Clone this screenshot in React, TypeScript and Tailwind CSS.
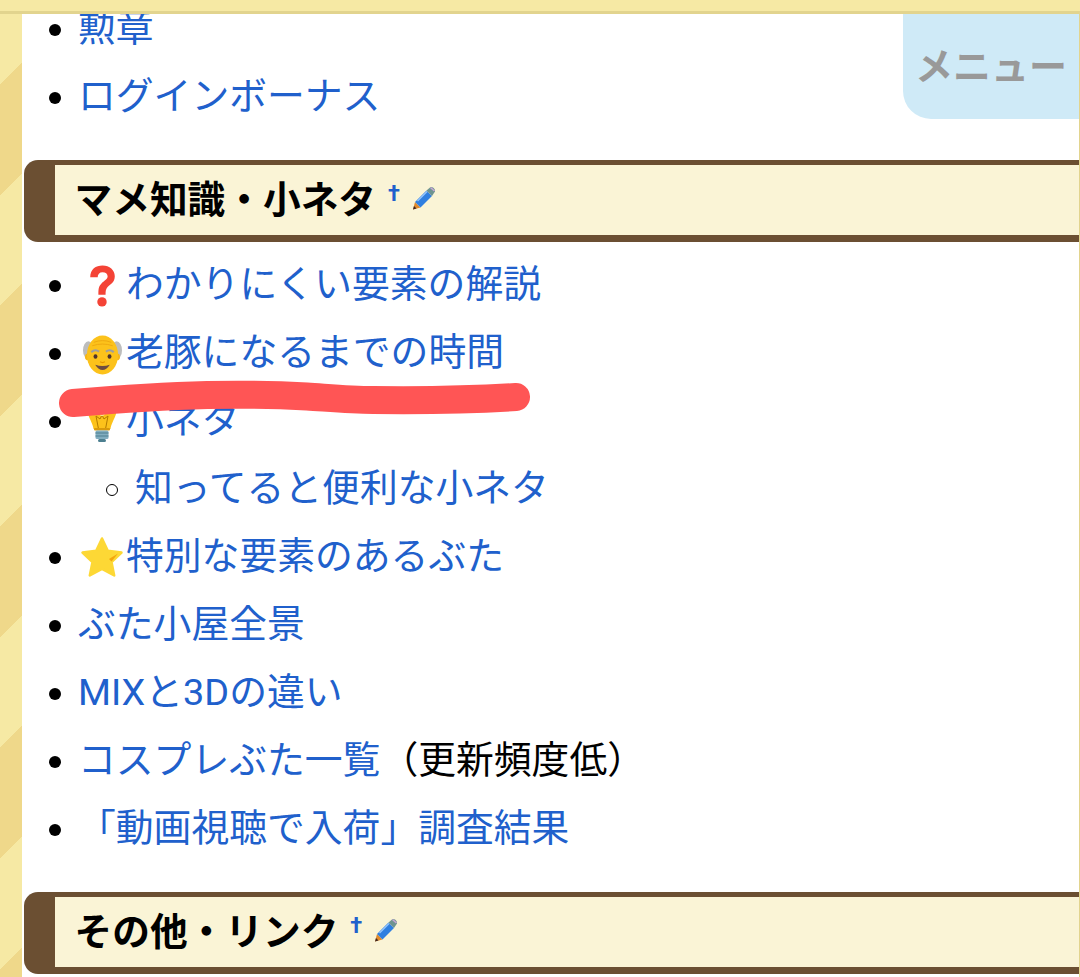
const FONT = "font-['Roboto','Noto_Sans_CJK_JP',sans-serif]";

const Question = () => (
  <svg viewBox="7 2 25 41" className="w-[27px] h-[42px] mt-[1px]">
    <path d="M7.5 14 C7.5 6 13 2.5 19.5 2.5 C26.5 2.5 31.5 7 31.5 13 C31.5 19 27 21 24.5 23.5 C22.5 25.5 22.5 28 22.5 31 L15.5 31 C15.5 26 15.5 23 18.5 20 C21.5 17 24.5 16 24.5 13 C24.5 10.5 22.5 9 19.5 9 C16.5 9 14.8 11 14.8 14 Z" fill="#f44336" />
    <circle cx="19" cy="38" r="4.6" fill="#f44336" />
  </svg>
);

const OldMan = () => (
  <svg viewBox="0 0 40 40" className="w-[39px] h-[40px] mt-[3px]">
    <ellipse cx="5.5" cy="15" rx="5.5" ry="9" fill="#bdbdbd" />
    <ellipse cx="34.5" cy="15" rx="5.5" ry="9" fill="#bdbdbd" />
    <circle cx="5.5" cy="22" r="3.5" fill="#f5b618" />
    <circle cx="34.5" cy="22" r="3.5" fill="#f5b618" />
    <ellipse cx="20" cy="20" rx="16" ry="20" fill="#fcc21b" />
    <path d="M11 7 Q20 3.5 29 7 M9.5 10.5 Q20 7 30.5 10.5" stroke="#eda60f" strokeWidth="0.9" fill="none" />
    <path d="M8.5 17 Q12.5 13.5 16.5 16.5 M23.5 16.5 Q27.5 13.5 31.5 17" stroke="#9e9e9e" strokeWidth="2.2" fill="none" />
    <ellipse cx="12.8" cy="21.5" rx="2" ry="2.3" fill="#4e342e" />
    <ellipse cx="27.2" cy="21.5" rx="2" ry="2.3" fill="#4e342e" />
    <path d="M17.5 27 Q20 28.5 22.5 27" stroke="#e59600" strokeWidth="1.2" fill="none" />
    <path d="M12.5 30 Q20 32.5 27.5 30 Q24 35.5 20 35.5 Q16 35.5 12.5 30 Z" fill="#6d4c41" />
  </svg>
);

const Bulb = () => (
  <svg viewBox="0 0 40 42" className="w-[40px] h-[42px] -mt-[1px]">
    <path d="M6 0 L34 0 L34 14 C32 20 29 24 28.5 29 L11.5 29 C11 24 8 20 6 14 Z" fill="#fcc21b" />
    <path d="M16.5 29 L14 16 L18 19 L20 15 L22 19 L26 16 L23.5 29" stroke="#b27a00" strokeWidth="1" fill="none" />
    <circle cx="20" cy="13" r="2.5" fill="none" stroke="#fff3b0" strokeWidth="1" />
    <rect x="12" y="28" width="16" height="2.5" rx="1" fill="#d99a0b" />
    <rect x="13.5" y="30.5" width="13" height="8.5" rx="1.5" fill="#82aec0" />
    <path d="M13.5 33 H26.5 M13.5 36 H26.5" stroke="#4c7f90" strokeWidth="1.2" />
    <rect x="16" y="39" width="8" height="3" rx="1.5" fill="#4c7f90" />
  </svg>
);

const Star = () => (
  <svg viewBox="0 0 44 42" className="w-[44px] h-[42px] -mt-[1px]">
    <path
      d="M22 2.5 L27.8 14.8 L41.5 16.5 L31.5 26 L34.2 39.5 L22 32.8 L9.8 39.5 L12.5 26 L2.5 16.5 L16.2 14.8 Z"
      fill="#fdd835"
      stroke="#fdd835"
      strokeWidth="2.5"
      strokeLinejoin="round"
    />
    <path d="M29 23 L38 17.5 L31.5 25.5 Z" fill="#f4a60d" />
  </svg>
);

const Pencil = () => (
  <svg viewBox="0 0 24 24" className="w-[24px] h-[24px]">
    <path d="M1 23.5 L3 16 L8.5 21.5 Z" fill="#e08a2c" />
    <path d="M1 23.5 L2 20 L4.5 22.5 Z" fill="#3e2723" />
    <path d="M3 16 L14.5 4.5 L20 10 L8.5 21.5 Z" fill="#2f7fe0" />
    <path d="M5.5 15 L15 5.5" stroke="#93c5fd" strokeWidth="1.5" />
    <path d="M14.5 4.5 L18 1.5 C20 0 23.5 3 23 5.5 L20 10 Z" fill="#6f9490" />
    <path d="M18.5 1.5 L22.5 5" stroke="#c9a7d8" strokeWidth="1.5" />
  </svg>
);

const Heading = ({ title }: { title: string }) => (
  <div className="ml-[2px] rounded-l-[14px] bg-[#6b4f32] pl-[31px] pt-[5px] pb-[7px]">
    <h2 className="h-[70px] bg-[#faf4d6] pl-[19.5px] flex items-center text-[37.7px] font-bold text-black">
      <span className="mt-[2px]">{title}</span>
      <span className="text-[#2060cc] text-[22px] font-bold self-start mt-[18px] ml-[12px]">†</span>
      <span className="ml-[12px] -mt-[5px]">
        <Pencil />
      </span>
    </h2>
  </div>
);

const Item = ({ icon, children }: { icon?: React.ReactNode; children: React.ReactNode }) => (
  <li className="h-[68px] flex items-center relative">
    <span className="absolute left-[-29px] mt-[2px] w-[12px] h-[12px] rounded-full bg-black" />
    {icon && <span className="flex items-center justify-center w-[48px] shrink-0">{icon}</span>}
    <span>{children}</span>
  </li>
);

const A = ({ children }: { children: React.ReactNode }) => <a className="text-[#2060cc]">{children}</a>;

export default function App() {
  return (
    <div className={`relative h-[977px] w-[1080px] overflow-hidden bg-[#f6e9a4] text-[37.8px] ${FONT}`}>
      {/* top bar */}
      <div className="relative z-10 h-[14px] bg-[#f6e9a4] border-b-[3px] border-[#e2d48e]" />

      <div className="flex h-[963px]">
        {/* striped wallpaper */}
        <div className="w-[22px] shrink-0 bg-[repeating-linear-gradient(135deg,#f6e9a4_-28.5px,#f6e9a4_49.5px,#efd88a_49.5px,#efd88a_128px)]" />

        <main className="relative flex-1 bg-white border-r border-[#e2d48e] leading-none">
          <ul className="pl-[56px] -mt-[19px]">
            <Item><A>勲章</A></Item>
            <Item><A>ログインボーナス</A></Item>
          </ul>

          <div className="mt-[29px]">
            <Heading title="マメ知識・小ネタ" />
          </div>

          <ul className="pl-[56px] mt-[9px]">
            <Item icon={<Question />}><A>わかりにくい要素の解説</A></Item>
            <Item icon={<OldMan />}><A>老豚になるまでの時間</A></Item>
            <Item icon={<Bulb />}><A>小ネタ</A></Item>
            <li className="h-[68px] flex items-center relative pl-[57px]">
              <span className="absolute left-[28px] mt-[2px] w-[12px] h-[12px] rounded-full border-[1.5px] border-black" />
              <A>知ってると便利な小ネタ</A>
            </li>
            <Item icon={<Star />}><A>特別な要素のあるぶた</A></Item>
            <Item><A>ぶた小屋全景</A></Item>
            <Item><A>MIXと3Dの違い</A></Item>
            <Item><A>コスプレぶた一覧</A><span className="text-black">（更新頻度低）</span></Item>
            <Item><A>「動画視聴で入荷」調査結果</A></Item>
          </ul>

          <div className="mt-[29px]">
            <Heading title="その他・リンク" />
          </div>

          {/* menu tab */}
          <div className="absolute top-0 right-0 w-[176px] h-[105px] bg-[#cfeaf7] rounded-bl-[28px] flex items-center justify-center text-[#999] font-bold text-[38px]">
            メニュー
          </div>
        </main>
      </div>

      {/* red marker stroke */}
      <svg className="absolute left-0 top-0 pointer-events-none" width="1080" height="977">
        <path
          d="M73 403 C120 399 165 396 207 395 C250 394 280 395 307 396.5 C330 398 350 400 373 400 C420 400.5 470 400 516 397"
          stroke="#ff5555"
          strokeWidth="28"
          strokeLinecap="round"
          fill="none"
        />
      </svg>
    </div>
  );
}
